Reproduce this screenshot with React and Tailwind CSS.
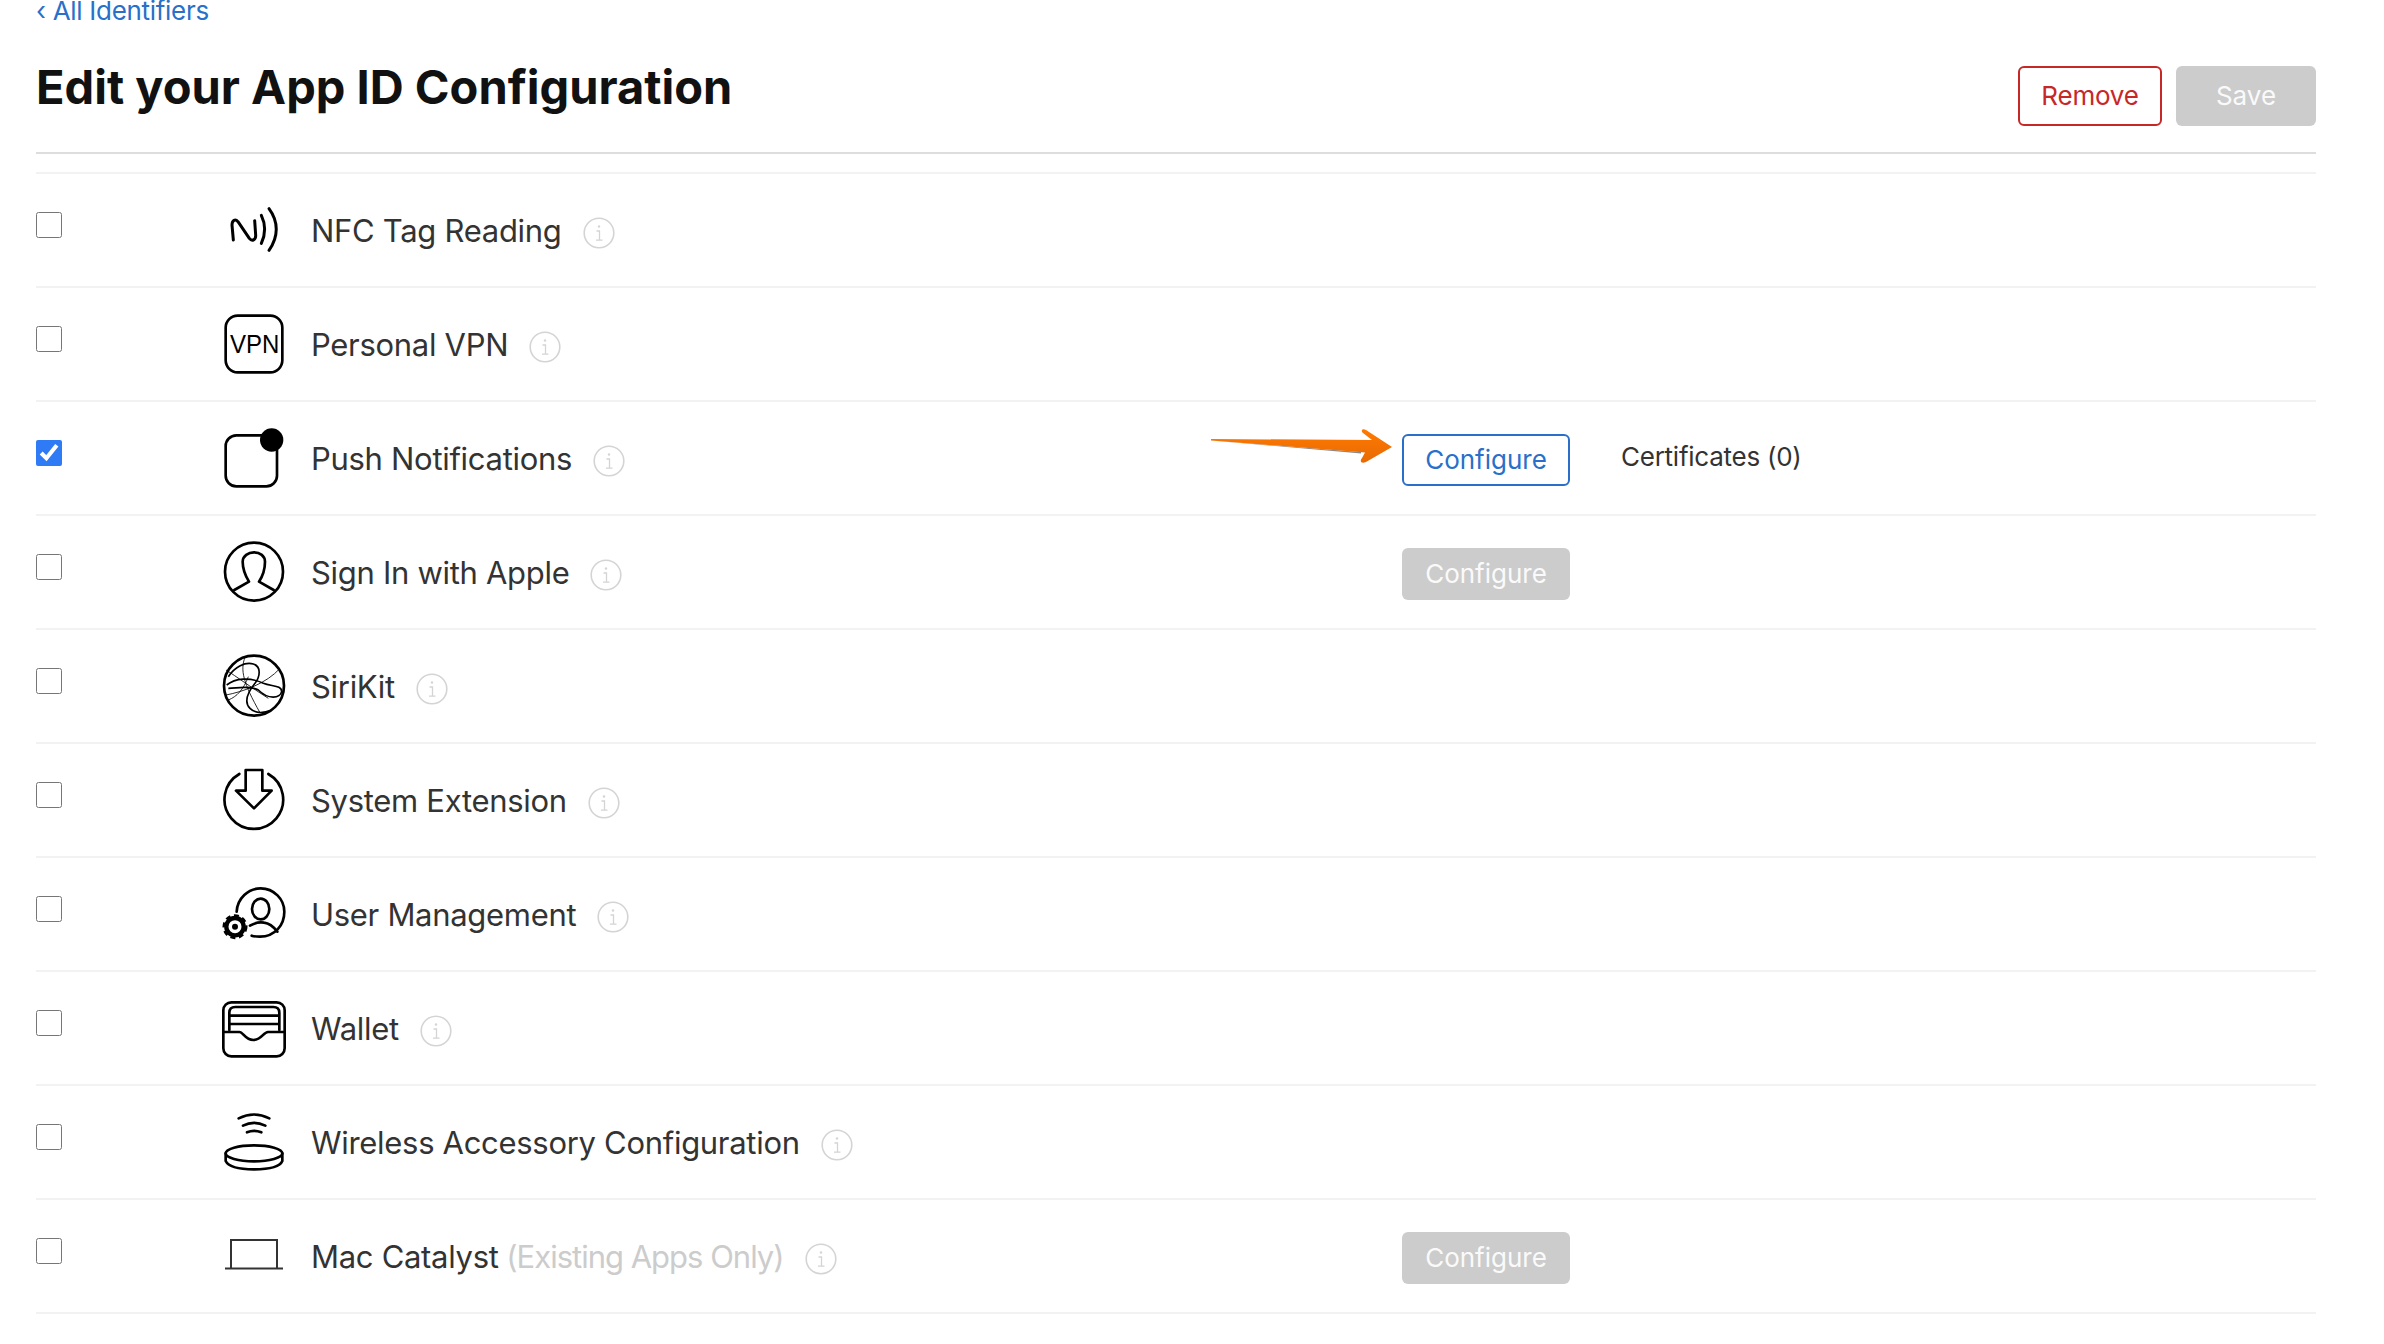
const ink = { fill: 'none', stroke: 'currentColor', strokeWidth: 8, strokeLinecap: 'round', strokeLinejoin: 'round' };

function Icon({ box, children }) {
  return (
    <svg width="68" height="68" viewBox={box} className="text-black shrink-0">
      {children}
    </svg>
  );
}

const icons = {
  nfc: (
    <Icon box="60 18 204 204">
      <g {...ink} strokeWidth="9">
        <path d="M100 150 L96 105 C96 90 106 86 114 95 L148 145 C156 155 168 150 167 135 L164 92" />
        <path d="M184 76 C198 105 198 130 184 160" />
        <path d="M207 56 C236 95 236 140 207 181" />
      </g>
    </Icon>
  ),
  vpn: (
    <Icon box="60 360 204 204">
      <rect x="77" y="377" width="170" height="170" rx="36" {...ink} />
      <text x="164" y="490" textAnchor="middle" fontSize="78" textLength="148" lengthAdjust="spacingAndGlyphs" fontFamily="Liberation Sans" fill="currentColor">VPN</text>
    </Icon>
  ),
  push: (
    <Icon box="60 702 204 204">
      <rect x="77" y="736" width="154" height="153" rx="32" {...ink} />
      <circle cx="215" cy="750" r="35" fill="currentColor" />
    </Icon>
  ),
  apple: (
    <Icon box="60 54 204 204">
      <g {...ink}>
        <circle cx="162" cy="155" r="87" />
        <path d="M103 210 L147 185 C135 165 128 145 128 125 C128 108 145 97 162 97 C180 97 195 108 195 125 C195 145 190 165 177 185 L221 210" />
      </g>
    </Icon>
  ),
  siri: (
    <Icon box="60 396 204 204">
      <circle cx="162" cy="497" r="90" {...ink} />
      <g fill="none" stroke="currentColor" strokeWidth="5">
        <path d="M85 470 C105 440 135 425 160 432 C185 440 180 470 165 490 C145 515 130 545 150 565 C165 580 190 580 215 570" />
        <path d="M80 495 C105 475 150 470 190 490 C215 500 245 495 245 515 C240 535 205 540 175 510 C150 495 110 505 85 505" />
      </g>
      <g fill="none" stroke="currentColor" strokeWidth="2.5">
        <path d="M135 412 C120 450 130 490 180 578" />
        <path d="M78 525 C130 515 200 490 240 445" />
        <path d="M78 450 C110 470 150 500 205 535" />
        <path d="M85 540 C110 530 130 510 145 470" />
      </g>
    </Icon>
  ),
  system: (
    <Icon box="60 738 204 204">
      <g {...ink}>
        <path d="M118 762 A88 88 0 1 0 205 762" />
        <path d="M137 750 H187 V812 H215 L162 865 L108 812 H137 Z" />
      </g>
    </Icon>
  ),
  user: (
    <Icon box="60 30 204 204">
      <g {...ink}>
        <path d="M110 125 C112 85 145 55 182 55 C222 55 253 88 253 125 C253 165 225 200 180 200 C170 200 160 199 155 197" />
        <ellipse cx="182" cy="117" rx="26" ry="31" />
        <path d="M150 167 C165 158 180 156 192 158 C210 160 222 172 232 185" />
      </g>
      <circle cx="105" cy="170" r="26" fill="none" stroke="currentColor" strokeWidth="13" />
      <circle cx="105" cy="170" r="34" fill="none" stroke="currentColor" strokeWidth="7" strokeDasharray="15 11" />
      <circle cx="105" cy="170" r="9" fill="currentColor" />
    </Icon>
  ),
  wallet: (
    <Icon box="60 372 204 204">
      <g {...ink}>
        <rect x="70" y="397" width="184" height="162" rx="24" />
        <path d="M88 480 V428 C88 416 96 411 106 411 H220 C232 411 238 416 238 428 V480" />
        <path d="M90 437 H236" />
        <path d="M90 462 H236" />
        <path d="M70 486 H118 C130 486 135 510 160 510 C185 510 190 486 204 486 H254" />
      </g>
    </Icon>
  ),
  wireless: (
    <Icon box="60 714 204 204">
      <g {...ink}>
        <path d="M116 745 Q162 722 208 745" />
        <path d="M129 767 Q162 750 196 767" />
        <path d="M141 787 Q162 778 184 787" />
        <ellipse cx="162" cy="850" rx="85" ry="24" />
        <path d="M77 850 V873 C85 890 120 898 162 898 C205 898 240 890 247 873 V850" />
      </g>
    </Icon>
  ),
  mac: (
    <svg width="68" height="68" viewBox="0 0 68 68" className="text-[#333] shrink-0">
      <path d="M11 46 V18 H57 V46" fill="none" stroke="currentColor" strokeWidth="2" />
      <path d="M5 46.5 H63" fill="none" stroke="currentColor" strokeWidth="2" />
    </svg>
  ),
};

function Info() {
  return (
    <svg width="32" height="32" viewBox="0 0 32 32" className="text-[#d4d4d4] ml-[21px] mt-[5px] shrink-0">
      <circle cx="16" cy="16" r="14.8" fill="none" stroke="currentColor" strokeWidth="1.6" />
      <circle cx="16" cy="9.5" r="1.2" fill="currentColor" />
      <path d="M13.5 14 H16.5 V23 M13 23.2 H19.5" fill="none" stroke="currentColor" strokeWidth="1.3" />
    </svg>
  );
}

function Row({ icon, label, note, checked, configure, certificates }) {
  return (
    <div className="flex items-center h-[114px] border-b-2 border-[#f2f2f2]">
      <div className="flex items-center w-[1366px] shrink-0">
        <input type="checkbox" defaultChecked={checked} className="w-[26px] h-[26px] m-0 mb-[10px] accent-[#2f7bf5] shrink-0" />
        <div className="ml-[158px] w-[68px] flex justify-center">{icons[icon]}</div>
        <div className="ml-[23px] mt-[2px] text-[31px] leading-[40px] tracking-[-0.3px] text-[#333]">
          {label}
          {note && <span className="text-[#ccc] tracking-[-1px]"> {note}</span>}
        </div>
        <Info />
      </div>
      {configure === 'active' && (
        <div className="relative mt-[3px]">
          <svg width="190" height="45" viewBox="0 0 190 45" className="absolute left-[-197px] top-[-9px]">
            <defs>
              <linearGradient id="arrowFill" x1="0" y1="0" x2="0" y2="1">
                <stop offset="0" stopColor="#ff7a00" />
                <stop offset="1" stopColor="#e86a05" />
              </linearGradient>
            </defs>
            <path d="M6 15.5 L156 28.5 L156 27 Z" fill="#8a8a8a" />
            <path d="M6 14 L167 15 L158 8 C155 5 158 3 161 5 L187 22 L161 37 C157 39 154 37 157 33 L160 27.5 L6 15.5 Z" fill="url(#arrowFill)" />
          </svg>
          <button className="w-[168px] h-[52px] rounded-[6px] border-2 border-[#2a6fc9] bg-white text-[#2a6fc9] text-[26px]">Configure</button>
        </div>
      )}
      {configure === 'disabled' && (
        <button className="mt-[3px] w-[168px] h-[52px] rounded-[6px] bg-[#ccc] text-[#fafafa] text-[26px]">Configure</button>
      )}
      {certificates && <span className="ml-[51px] mb-[3px] text-[26px] tracking-[-0.25px] text-[#333]">{certificates}</span>}
    </div>
  );
}

const rows = [
  { icon: 'nfc', label: 'NFC Tag Reading' },
  { icon: 'vpn', label: 'Personal VPN' },
  { icon: 'push', label: 'Push Notifications', checked: true, configure: 'active', certificates: 'Certificates (0)' },
  { icon: 'apple', label: 'Sign In with Apple', configure: 'disabled' },
  { icon: 'siri', label: 'SiriKit' },
  { icon: 'system', label: 'System Extension' },
  { icon: 'user', label: 'User Management' },
  { icon: 'wallet', label: 'Wallet' },
  { icon: 'wireless', label: 'Wireless Accessory Configuration' },
  { icon: 'mac', label: 'Mac Catalyst', note: '(Existing Apps Only)', configure: 'disabled' },
];

export default function App() {
  return (
    <div className="h-[1344px] overflow-hidden bg-white pl-9 pr-[68px] font-['Inter',sans-serif]">
      <div className="flex justify-between items-start h-[154px] border-b-2 border-[#ddd]">
        <div>
          <a className="block text-[26px] leading-[32px] mt-[-5px] tracking-[-0.3px] text-[#2a6fc9]">‹ All Identifiers</a>
          <h1 className="mt-[32px] text-[47px] leading-[56px] font-bold text-[#111]">Edit your App ID Configuration</h1>
        </div>
        <div className="flex gap-[14px] mt-[66px]">
          <button className="w-[144px] h-[60px] pb-[2px] rounded-[6px] border-2 border-[#c62828] bg-white text-[#c62828] text-[26px] tracking-[-0.2px]">Remove</button>
          <button className="w-[140px] h-[60px] pb-[2px] rounded-[6px] bg-[#ccc] text-[#fafafa] text-[26px]">Save</button>
        </div>
      </div>
      <div className="mt-[18px] border-t-2 border-[#f2f2f2]">
        {rows.map(row => (
          <Row key={row.icon} {...row} />
        ))}
      </div>
    </div>
  );
}
